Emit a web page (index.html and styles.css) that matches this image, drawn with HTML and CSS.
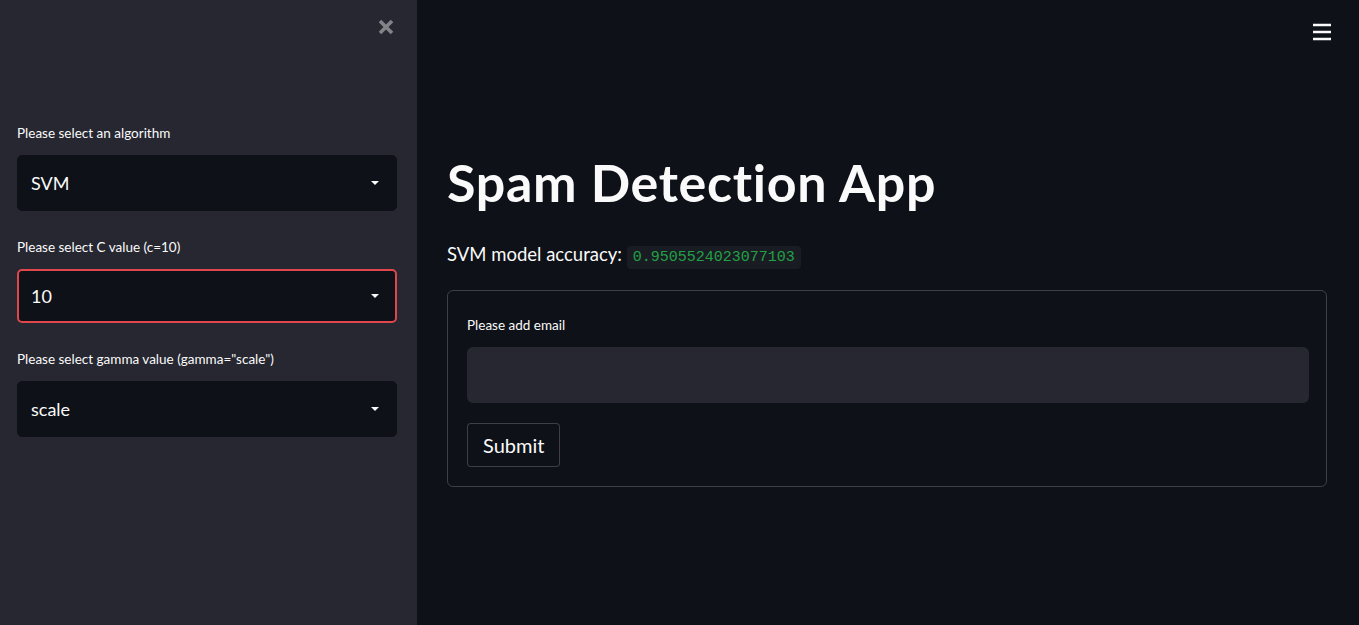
FILE: index.html
```html
<!DOCTYPE html>
<html>
<head>
<meta charset="utf-8">
<link rel="stylesheet" href="styles.css">
</head>
<body>
<div class="app">
  <aside class="sidebar">
    <div class="sidebar-top">
      <button class="close-btn" aria-label="Close sidebar">
        <svg width="18" height="18" viewBox="0 0 18 18"><path d="M3 3 L15 15 M15 3 L3 15" stroke="currentColor" stroke-width="3.6" stroke-linecap="butt"/></svg>
      </button>
    </div>
    <div class="widget">
      <div class="label">Please select an algorithm</div>
      <div class="select"><span class="value">SVM</span><span class="caret"></span></div>
    </div>
    <div class="widget">
      <div class="label">Please select C value (c=10)</div>
      <div class="select focused"><span class="value">10</span><span class="caret"></span></div>
    </div>
    <div class="widget">
      <div class="label">Please select gamma value (gamma="scale")</div>
      <div class="select"><span class="value">scale</span><span class="caret"></span></div>
    </div>
  </aside>
  <main class="main">
    <header class="topbar">
      <button class="menu-btn" aria-label="Menu">
        <svg width="20" height="18" viewBox="0 0 20 18"><path d="M1 2 H19 M1 9 H19 M1 16 H19" stroke="currentColor" stroke-width="2.4"/></svg>
      </button>
    </header>
    <section class="content">
      <h1 class="title">Spam Detection App</h1>
      <p class="accuracy">SVM model accuracy: <code>0.9505524023077103</code></p>
      <form class="form">
        <div class="label">Please add email</div>
        <div class="textinput"></div>
        <button type="button" class="submit">Submit</button>
      </form>
    </section>
  </main>
</div>
</body>
</html>
```
FILE: styles.css
```css
* { box-sizing: border-box; }
html, body { margin: 0; padding: 0; height: 100%; }
body {
  font-family: "Source Sans Pro", Lato, "Noto Sans", sans-serif;
  background: #0e1117;
  color: #fafafa;
}
.app {
  display: flex;
  height: 625px;
}
.sidebar {
  width: 417px;
  flex: none;
  background: #262730;
  padding: 0 20px 0 17px;
}
.sidebar-top {
  height: 123px;
  display: flex;
  justify-content: flex-end;
  align-items: flex-start;
  padding-top: 18px;
}
.close-btn {
  background: none;
  border: 0;
  padding: 0;
  margin-right: 2px;
  color: #828388;
  display: flex;
}
.widget { margin-bottom: 26px; }
.label {
  font-size: 13.5px;
  line-height: 20px;
  color: #fafafa;
  margin-bottom: 12px;
}
.select {
  height: 56px;
  background: #0e1117;
  border: 1px solid #0e1117;
  border-radius: 5px;
  display: flex;
  align-items: center;
  justify-content: space-between;
  padding: 0 17px 0 13px;
  font-size: 18px;
}
.select.focused {
  height: 54px;
  border: 2px solid #e0474c;
  padding-left: 12px;
  padding-right: 16px;
}
.caret {
  width: 0; height: 0;
  border-left: 4px solid transparent;
  border-right: 4px solid transparent;
  border-top: 4px solid #fafafa;
}
.main {
  flex: 1;
  position: relative;
}
.topbar {
  height: 0;
}
.menu-btn {
  position: absolute;
  top: 23px;
  right: 27px;
  background: none;
  border: 0;
  padding: 0;
  color: #fafafa;
  display: flex;
}
.content {
  padding: 150px 32px 0 30px;
}
.title {
  margin: 0;
  font-size: 52px;
  font-weight: 700;
  line-height: 64px;
  letter-spacing: 0.7px;
}
.accuracy {
  margin: 28px 0 20px;
  font-size: 18.5px;
  line-height: 24px;
}
.accuracy code {
  font-family: "Liberation Mono", "DejaVu Sans Mono", monospace;
  font-size: 15px;
  color: #21a144;
  background: #1a1c24;
  border-radius: 4px;
  padding: 3px 6px;
}
.form {
  border: 1px solid rgba(250,250,250,0.2);
  border-radius: 6px;
  padding: 24px 17px 19px 19px;
  margin: 0;
}
.form .label { margin-bottom: 12px; }
.textinput {
  height: 56px;
  background: #262730;
  border-radius: 6px;
  margin-bottom: 20px;
}
.submit {
  font-family: inherit;
  font-size: 20px;
  color: #fafafa;
  background: #0e1117;
  border: 1px solid rgba(250,250,250,0.2);
  border-radius: 4px;
  height: 44px;
  padding: 0 15px;
}
```
